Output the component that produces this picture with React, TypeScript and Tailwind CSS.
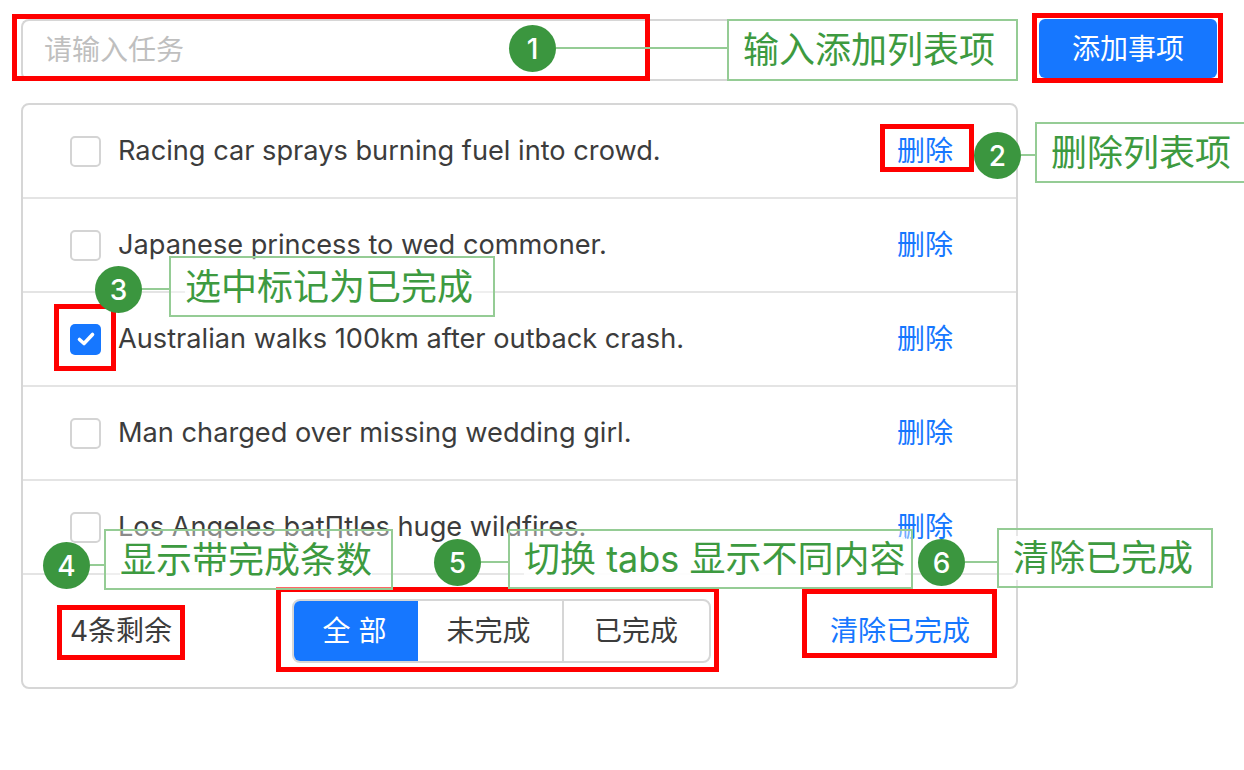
const items = [
  { text: "Racing car sprays burning fuel into crowd.", done: false },
  { text: "Japanese princess to wed commoner.", done: false },
  { text: "Australian walks 100km after outback crash.", done: true },
  { text: "Man charged over missing wedding girl.", done: false },
  { text: "Los Angeles bat∏tles huge wildfires.", done: false },
];

function Check({ done }: { done: boolean }) {
  if (done) {
    return (
      <span className="flex h-[31px] w-[31px] shrink-0 items-center justify-center rounded-[5px] bg-[#1677ff]">
        <svg width="22" height="22" viewBox="0 0 22 22" fill="none">
          <path d="M4.5 11.5l4.5 4 8.5-9" stroke="#fff" strokeWidth="3.6" strokeLinecap="round" strokeLinejoin="round" />
        </svg>
      </span>
    );
  }
  return <span className="h-[31px] w-[31px] shrink-0 rounded-[5px] border-2 border-[#d4d4d4] bg-white" />;
}

function TodoApp() {
  return (
    <div className="pl-[21px] pt-[19px]">
      <div className="flex items-start">
        <div className="flex h-[62px] w-[997px] items-center rounded-l-lg border-2 border-r-0 border-[#d6d6d6] pl-[21px] text-[28px] text-[#bfbfbf]">
          请输入任务
        </div>
        <button className="ml-[21px] h-[59px] w-[178px] rounded-md bg-[#1677ff] text-[28px] text-white">
          添加事项
        </button>
      </div>

      <div className="mt-[22px] w-[997px] rounded-lg border-2 border-[#d6d6d6]">
        {items.map((it) => (
          <div key={it.text} className="flex h-[94px] items-center border-b-2 border-[#e4e4e4] pl-[47px] pr-[63px]">
            <Check done={it.done} />
            <span className="ml-[17px] flex-1 text-[27.2px] text-[#3c3c3c]">{it.text}</span>
            <span className="text-[28px] text-[#1677ff]">删除</span>
          </div>
        ))}
        <div className="flex h-[112px] items-center justify-between pl-[47px] pr-[46px] text-[28px]">
          <span className="text-[#3c3c3c]">4条剩余</span>
          <div className="flex h-[64px] overflow-hidden rounded-lg border-2 border-[#d6d6d6]">
            <span className="-m-[2px] flex w-[126px] items-center justify-center rounded-l-lg bg-[#1677ff] text-white">全 部</span>
            <span className="flex w-[148px] items-center justify-center border-r-2 border-[#d6d6d6] text-[#3c3c3c]">未完成</span>
            <span className="flex w-[145px] items-center justify-center text-[#3c3c3c]">已完成</span>
          </div>
          <span className="text-[#1677ff]">清除已完成</span>
        </div>
      </div>
    </div>
  );
}

function Dot({ n, cls }: { n: number; cls: string }) {
  return (
    <div className={"absolute flex h-[47px] w-[47px] items-center justify-center rounded-full bg-[#3b963f] text-[28px] font-medium text-white " + cls}>
      {n}
    </div>
  );
}

function Label({ text, cls }: { text: string; cls: string }) {
  return (
    <div className={"absolute flex items-center border-2 border-[#95cc95] bg-white/40 pl-[14px] " + cls}>
      <span className="bg-white/90 text-[36px] leading-[44px] text-[#3d9a40]">{text}</span>
    </div>
  );
}

function Annotations() {
  return (
    <>
      {/* red frames */}
      <div className="absolute left-[12px] top-[14px] h-[67px] w-[638px] border-[5px] border-[#ff0000]" />
      <div className="absolute left-[1032px] top-[13px] h-[70px] w-[191px] border-[5px] border-[#ff0000]" />
      <div className="absolute left-[880px] top-[124px] h-[48px] w-[94px] border-[5px] border-[#ff0000]" />
      <div className="absolute left-[54px] top-[304px] h-[67px] w-[62px] border-[5px] border-[#ff0000]" />
      <div className="absolute left-[57px] top-[605px] h-[55px] w-[128px] border-[5px] border-[#ff0000]" />
      <div className="absolute left-[276px] top-[587px] h-[85px] w-[443px] border-[5px] border-[#ff0000]" />
      <div className="absolute left-[802px] top-[589px] h-[69px] w-[195px] border-[5px] border-[#ff0000]" />

      {/* connector lines */}
      <div className="absolute left-[556px] top-[47px] h-[2px] w-[171px] bg-[#95cc95]" />
      <div className="absolute left-[1021px] top-[154px] h-[2px] w-[14px] bg-[#95cc95]" />
      <div className="absolute left-[141px] top-[288px] h-[2px] w-[28px] bg-[#95cc95]" />
      <div className="absolute left-[90px] top-[564px] h-[2px] w-[14px] bg-[#95cc95]" />
      <div className="absolute left-[481px] top-[561px] h-[2px] w-[27px] bg-[#95cc95]" />
      <div className="absolute left-[965px] top-[561px] h-[2px] w-[32px] bg-[#95cc95]" />

      {/* callouts */}
      <Dot n={1} cls="left-[509px] top-[25px]" />
      <Label text="输入添加列表项" cls="left-[727px] top-[19px] h-[62px] w-[291px]" />
      <Dot n={2} cls="left-[974px] top-[132px]" />
      <Label text="删除列表项" cls="left-[1035px] top-[122px] h-[61px] w-[215px]" />
      <Dot n={3} cls="left-[95px] top-[266px]" />
      <Label text="选中标记为已完成" cls="left-[169px] top-[256px] h-[61px] w-[326px]" />
      <Dot n={4} cls="left-[43px] top-[542px]" />
      <Label text="显示带完成条数" cls="left-[104px] top-[529px] h-[61px] w-[289px]" />
      <Dot n={5} cls="left-[434px] top-[539px]" />
      <Label text="切换 tabs 显示不同内容" cls="left-[508px] top-[529px] h-[60px] w-[405px]" />
      <Dot n={6} cls="left-[918px] top-[539px]" />
      <Label text="清除已完成" cls="left-[997px] top-[528px] h-[60px] w-[216px]" />
    </>
  );
}

export default function App() {
  return (
    <div
      className="relative h-[770px] w-[1244px] overflow-hidden bg-white"
      style={{ fontFamily: '"Inter", "Noto Sans CJK SC", sans-serif' }}
    >
      <TodoApp />
      <Annotations />
    </div>
  );
}
